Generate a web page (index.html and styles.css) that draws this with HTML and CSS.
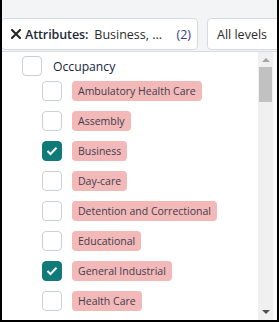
FILE: index.html
```html
<!DOCTYPE html>
<html>
<head>
<meta charset="utf-8">
<link rel="stylesheet" href="styles.css">
</head>
<body>
<div class="frame">
  <div class="toolbar">
    <div class="btn btn-attr">
      <svg class="x-icon" width="10" height="10" viewBox="0 0 10 10"><path d="M1 1 L9 9 M9 1 L1 9" stroke="#222" stroke-width="2" stroke-linecap="square"/></svg>
      <span class="attr-label">Attributes:</span>
      <span class="attr-value">Business, ...</span>
      <span class="attr-count">(2)</span>
    </div>
    <div class="btn btn-levels">All levels</div>
  </div>
  <div class="panel">
    <div class="list">
      <div class="row parent">
        <span class="cb"></span>
        <span class="parent-label">Occupancy</span>
      </div>
      <div class="row child"><span class="cb"></span><span class="tag">Ambulatory Health Care</span></div>
      <div class="row child"><span class="cb"></span><span class="tag">Assembly</span></div>
      <div class="row child"><span class="cb checked"><svg width="12" height="10" viewBox="0 0 12 10"><path d="M1.5 5 L4.5 8 L10.5 1.8" fill="none" stroke="#fff" stroke-width="2"/></svg></span><span class="tag">Business</span></div>
      <div class="row child"><span class="cb"></span><span class="tag">Day-care</span></div>
      <div class="row child"><span class="cb"></span><span class="tag">Detention and Correctional</span></div>
      <div class="row child"><span class="cb"></span><span class="tag">Educational</span></div>
      <div class="row child"><span class="cb checked"><svg width="12" height="10" viewBox="0 0 12 10"><path d="M1.5 5 L4.5 8 L10.5 1.8" fill="none" stroke="#fff" stroke-width="2"/></svg></span><span class="tag">General Industrial</span></div>
      <div class="row child"><span class="cb"></span><span class="tag">Health Care</span></div>
    </div>
    <div class="scrollbar">
      <div class="arrow up"></div>
      <div class="thumb"></div>
      <div class="track"></div>
      <div class="arrow down"></div>
    </div>
    <div class="edge"></div>
  </div>
</div>
</body>
</html>
```
FILE: styles.css
```css
html, body {
  margin: 0;
  padding: 0;
}
body {
  width: 279px;
  height: 322px;
  overflow: hidden;
  font-family: "Open Sans", "Noto Sans", sans-serif;
}
.frame {
  box-sizing: border-box;
  width: 279px;
  height: 322px;
  border-left: 2px solid #000;
  border-right: 2px solid #000;
  border-bottom: 2px solid #000;
  background: #f3f4f6;
  display: flex;
  flex-direction: column;
  overflow: hidden;
}
.toolbar {
  display: flex;
  gap: 9px;
  padding-top: 18px;
  height: 51px;
  box-sizing: border-box;
  flex: none;
  overflow: hidden;
}
.btn {
  box-sizing: border-box;
  height: 32px;
  background: #fff;
  border: 1px solid #d6dade;
  border-radius: 4px;
  display: flex;
  align-items: center;
  font-size: 12.5px;
  color: #2b2b2b;
  flex: none;
  white-space: nowrap;
}
.btn-attr {
  width: 197px;
  margin-left: -1px;
  padding-left: 9px;
}
.x-icon {
  flex: none;
  margin-right: 4px;
}
.attr-label {
  font-weight: 600;
  color: #1e2a36;
  margin-right: 6px;
  letter-spacing: -0.1px;
}
.attr-value {
  color: #2b2b2b;
}
.attr-count {
  color: #3b3a8a;
  margin-left: auto;
  margin-right: 6px;
}
.btn-levels {
  width: 90px;
  padding-left: 9px;
}
.panel {
  flex: 1;
  display: flex;
  background: #fff;
  border-top: 1px solid #d6dade;
  min-height: 0;
}
.list {
  flex: 1;
  padding: 4px 0 0 20px;
  display: flex;
  flex-direction: column;
  gap: 10px;
  overflow: hidden;
}
.row {
  display: flex;
  align-items: center;
  height: 20px;
  flex: none;
}
.row.parent {
  margin-bottom: -5px;
}
.row.child {
  padding-left: 20px;
}
.cb {
  box-sizing: border-box;
  width: 20px;
  height: 20px;
  border: 1px solid #c9d0d6;
  border-radius: 4px;
  background: #fff;
  flex: none;
  display: flex;
  align-items: center;
  justify-content: center;
}
.cb.checked {
  background: #0f7a78;
  border-color: #0f7a78;
}
.parent-label {
  margin-left: 11px;
  font-size: 12.2px;
  color: #15263a;
}
.tag {
  margin-left: 10px;
  height: 20px;
  line-height: 20px;
  padding: 0 6px;
  border-radius: 4px;
  background: #f3b9b9;
  color: #3f3d4e;
  font-size: 10.5px;
  white-space: nowrap;
}
.scrollbar {
  width: 15px;
  flex: none;
  background: #f0f0f0;
  display: flex;
  flex-direction: column;
  align-items: center;
}
.arrow {
  width: 0;
  height: 0;
  border-left: 4px solid transparent;
  border-right: 4px solid transparent;
  flex: none;
}
.arrow.up {
  margin-top: 6px;
  border-bottom: 4px solid #a3a3a3;
}
.arrow.down {
  margin-bottom: 6px;
  border-top: 4px solid #505050;
}
.thumb {
  width: 13px;
  height: 35px;
  margin-top: 5px;
  background: #c1c1c1;
  flex: none;
}
.track {
  flex: 1;
}
.edge {
  width: 4px;
  flex: none;
  background: #fafafa;
}
```
